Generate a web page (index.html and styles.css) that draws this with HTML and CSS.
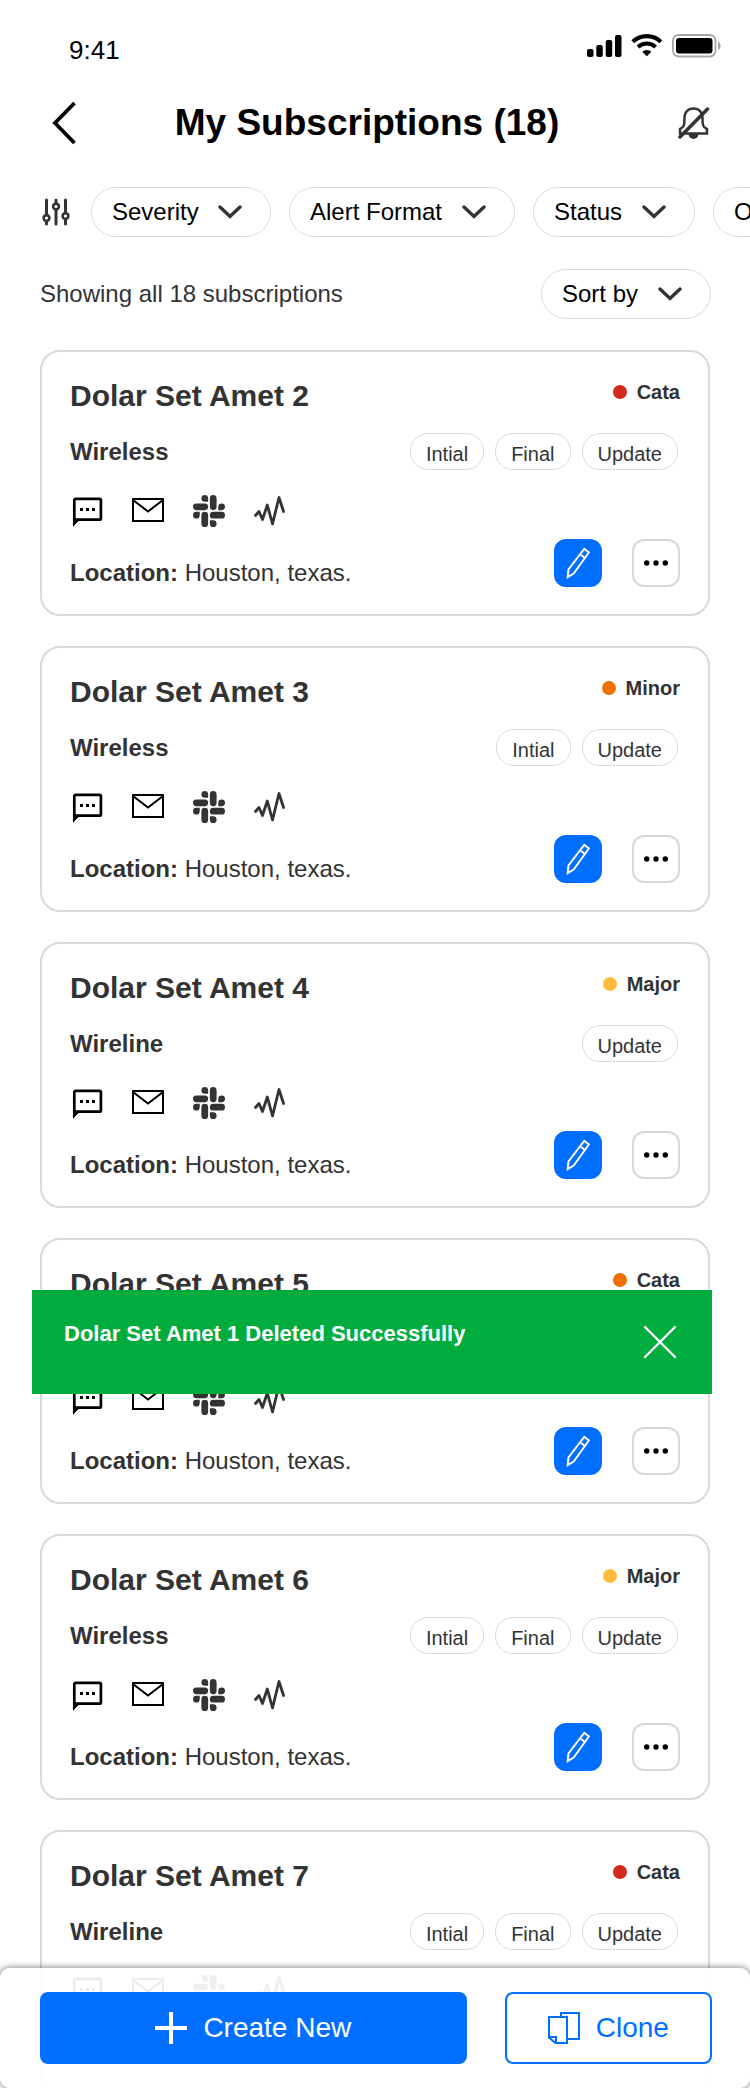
FILE: index.html
```html
<!DOCTYPE html>
<html lang="en">
<head>
<meta charset="utf-8">
<meta name="viewport" content="width=device-width, initial-scale=1">
<title>My Subscriptions</title>
<link rel="stylesheet" href="styles.css">
</head>
<body>
<svg class="sprite" aria-hidden="true">
  <symbol id="chevron" viewBox="0 0 24 14"><path d="M2 2l10 9.500L22 2" fill="none" stroke="#333" stroke-width="3.400" stroke-linecap="round" stroke-linejoin="miter"/></symbol>
  <symbol id="message" viewBox="0 0 32 32"><path d="M3.300 28V5.200a1.300 1.300 0 0 1 1.300-1.300h24a1.300 1.300 0 0 1 1.300 1.300v18.200a1.300 1.300 0 0 1-1.300 1.300H6z" fill="none" stroke="#000" stroke-width="2.700"/><path d="M2 22v9.500l6.500-6.500z"/><path d="M9 13h3v3H9zm6 0h3v3h-3zm6 0h3v3h-3z"/></symbol>
  <symbol id="mail" viewBox="0 0 32 32"><path d="M1 4h30v22H1zM1 5l15 11.500L31 5" fill="none" stroke="#000" stroke-width="2"/></symbol>
  <symbol id="slack-arm" viewBox="0 0 24 24"><path d="M8.830 0a2.520 2.520 0 0 1 2.520 2.520v2.520H8.830a2.520 2.520 0 0 1 0-5.040zM2.520 6.310h6.310a2.520 2.520 0 0 1 0 5.040H2.520a2.520 2.520 0 0 1 0-5.040z"/></symbol>
  <symbol id="slack" viewBox="0 0 24 24">
    <g fill="#333">
      <use href="#slack-arm" width="24" height="24"/>
      <use href="#slack-arm" width="24" height="24" transform="rotate(90 12 12)"/>
      <use href="#slack-arm" width="24" height="24" transform="rotate(180 12 12)"/>
      <use href="#slack-arm" width="24" height="24" transform="rotate(270 12 12)"/>
    </g>
  </symbol>
  <symbol id="pulse" viewBox="0 0 32 32"><path d="M1.500 20.500L5 16.500l3.500 8L13.300 10l5.200 19L25 2.500 29.500 16.500" fill="none" stroke="#333" stroke-width="2.800" stroke-linejoin="round" stroke-linecap="round"/></symbol>
  <symbol id="pencil" viewBox="0 0 24 32"><path d="M18.200 1.800l4.700 3.600-15 20.800-6.200 4 .8-7.800zM14.200 7.200l4.700 3.700" fill="none" stroke="#fff" stroke-width="1.900"/></symbol>
  <symbol id="dots" viewBox="0 0 24 6"><circle cx="2.700" cy="3" r="2.700"/><circle cx="12" cy="3" r="2.700"/><circle cx="21.300" cy="3" r="2.700"/></symbol>
</svg>

<div class="app">
  <div class="status-bar">
    <span class="clock">9:41</span>
    <svg class="status-icons" viewBox="0 0 136 24" aria-hidden="true">
      <rect x="0" y="15" width="6.500" height="8" rx="2"/>
      <rect x="9.300" y="11" width="6.500" height="12" rx="2"/>
      <rect x="18.700" y="6" width="6.500" height="17" rx="2"/>
      <rect x="28" y="1" width="6.500" height="22" rx="2"/>
      <path d="M45.800 7.800a20.300 20.300 0 0 1 28 0" fill="none" stroke="#000" stroke-width="4.200"/>
      <path d="M51 13a13 13 0 0 1 17.600 0" fill="none" stroke="#000" stroke-width="4"/>
      <path d="M55.300 17.700a6.700 6.700 0 0 1 9 0L59.800 22.300z"/>
      <rect x="86" y="1" width="42.500" height="21.500" rx="5.500" fill="none" stroke="#a6a6a6" stroke-width="1.800"/>
      <rect x="89" y="4" width="36.500" height="15.500" rx="3"/>
      <path d="M131 7.500c3.500 1.500 3.500 7 0 8.500z" fill="#a6a6a6"/>
    </svg>
  </div>

  <header class="header">
    <button class="icon-button" type="button" aria-label="Back">
      <svg class="back-icon" viewBox="0 0 24 44" aria-hidden="true"><path d="M22.500 2L3 22l19.500 20" fill="none" stroke="#000" stroke-width="3.800"/></svg>
    </button>
    <h1 class="page-title">My Subscriptions (18)</h1>
    <button class="icon-button" type="button" aria-label="Mute alerts">
      <svg class="bell-icon" viewBox="0 0 32 34" aria-hidden="true"><path d="M6.500 12.500C6.500 6 10 2.500 15.500 2.500s9 3.500 9 10c0 6.500.5 9 4.500 10.500v4.500H2V23c4-1.500 4.500-4 4.500-10.500z" fill="none" stroke="#333" stroke-width="2.500"/><path d="M10.500 28h10a5 5 0 0 1-10 0z" fill="#333"/><path d="M2 31L29.500 3" stroke="#333" stroke-width="3.500" stroke-linecap="round"/></svg>
    </button>
  </header>

  <div class="filters">
    <button class="icon-button filter-button" type="button" aria-label="Filters">
      <svg class="sliders-icon" viewBox="0 0 28 28" aria-hidden="true"><path d="M4.500 2v14M4.500 24v2M14 2v3M14 12v14M23.500 2v12M23.500 22v4" stroke="#333" stroke-width="3" stroke-linecap="round"/><g fill="none" stroke="#333" stroke-width="2.600"><circle cx="4.500" cy="20" r="2.900"/><circle cx="14" cy="8.500" r="2.900"/><circle cx="23.500" cy="18" r="2.900"/></g></svg>
    </button>
    <span class="pill"><select aria-label="Severity"><option>Severity</option></select><svg class="chevron"><use href="#chevron"/></svg></span>
    <span class="pill"><select aria-label="Alert Format"><option>Alert Format</option></select><svg class="chevron"><use href="#chevron"/></svg></span>
    <span class="pill"><select aria-label="Status"><option>Status</option></select><svg class="chevron"><use href="#chevron"/></svg></span>
    <span class="pill"><select aria-label="O"><option>O</option></select><svg class="chevron"><use href="#chevron"/></svg></span>
  </div>

  <div class="summary">
    <p class="count">Showing all 18 subscriptions</p>
    <span class="pill"><select aria-label="Sort by"><option>Sort by</option></select><svg class="chevron"><use href="#chevron"/></svg></span>
  </div>

  <main class="list">
    <article class="card">
      <div class="card-head"><h2 class="card-title">Dolar Set Amet 2</h2><span class="severity"><i class="dot dot-red"></i>Cata</span></div>
      <div class="card-type"><strong>Wireless</strong><div class="tags"><span class="tag">Intial</span><span class="tag">Final</span><span class="tag">Update</span></div></div>
      <div class="card-foot">
        <div class="details">
          <div class="channels"><svg><use href="#message"/></svg><svg><use href="#mail"/></svg><svg><use href="#slack"/></svg><svg><use href="#pulse"/></svg></div>
          <p class="location"><strong>Location:</strong> Houston, texas.</p>
        </div>
        <div class="actions"><button class="edit" type="button" aria-label="Edit"><svg><use href="#pencil"/></svg></button><button class="more" type="button" aria-label="More"><svg><use href="#dots"/></svg></button></div>
      </div>
    </article>

    <article class="card">
      <div class="card-head"><h2 class="card-title">Dolar Set Amet 3</h2><span class="severity"><i class="dot dot-orange"></i>Minor</span></div>
      <div class="card-type"><strong>Wireless</strong><div class="tags"><span class="tag">Intial</span><span class="tag">Update</span></div></div>
      <div class="card-foot">
        <div class="details">
          <div class="channels"><svg><use href="#message"/></svg><svg><use href="#mail"/></svg><svg><use href="#slack"/></svg><svg><use href="#pulse"/></svg></div>
          <p class="location"><strong>Location:</strong> Houston, texas.</p>
        </div>
        <div class="actions"><button class="edit" type="button" aria-label="Edit"><svg><use href="#pencil"/></svg></button><button class="more" type="button" aria-label="More"><svg><use href="#dots"/></svg></button></div>
      </div>
    </article>

    <article class="card">
      <div class="card-head"><h2 class="card-title">Dolar Set Amet 4</h2><span class="severity"><i class="dot dot-yellow"></i>Major</span></div>
      <div class="card-type"><strong>Wireline</strong><div class="tags"><span class="tag">Update</span></div></div>
      <div class="card-foot">
        <div class="details">
          <div class="channels"><svg><use href="#message"/></svg><svg><use href="#mail"/></svg><svg><use href="#slack"/></svg><svg><use href="#pulse"/></svg></div>
          <p class="location"><strong>Location:</strong> Houston, texas.</p>
        </div>
        <div class="actions"><button class="edit" type="button" aria-label="Edit"><svg><use href="#pencil"/></svg></button><button class="more" type="button" aria-label="More"><svg><use href="#dots"/></svg></button></div>
      </div>
    </article>

    <article class="card">
      <div class="card-head"><h2 class="card-title">Dolar Set Amet 5</h2><span class="severity"><i class="dot dot-orange"></i>Cata</span></div>
      <div class="card-type"></div>
      <div class="card-foot">
        <div class="details">
          <div class="channels"><svg><use href="#message"/></svg><svg><use href="#mail"/></svg><svg><use href="#slack"/></svg><svg><use href="#pulse"/></svg></div>
          <p class="location"><strong>Location:</strong> Houston, texas.</p>
        </div>
        <div class="actions"><button class="edit" type="button" aria-label="Edit"><svg><use href="#pencil"/></svg></button><button class="more" type="button" aria-label="More"><svg><use href="#dots"/></svg></button></div>
      </div>
      <div class="toast" role="status">
        <p class="toast-text">Dolar Set Amet 1 Deleted Successfully</p>
        <button class="icon-button" type="button" aria-label="Dismiss"><svg class="close-icon" viewBox="0 0 34 34" aria-hidden="true"><path d="M2 2l30 30M32 2L2 32" stroke="#fff" stroke-width="2.400" stroke-linecap="round"/></svg></button>
      </div>
    </article>

    <article class="card">
      <div class="card-head"><h2 class="card-title">Dolar Set Amet 6</h2><span class="severity"><i class="dot dot-yellow"></i>Major</span></div>
      <div class="card-type"><strong>Wireless</strong><div class="tags"><span class="tag">Intial</span><span class="tag">Final</span><span class="tag">Update</span></div></div>
      <div class="card-foot">
        <div class="details">
          <div class="channels"><svg><use href="#message"/></svg><svg><use href="#mail"/></svg><svg><use href="#slack"/></svg><svg><use href="#pulse"/></svg></div>
          <p class="location"><strong>Location:</strong> Houston, texas.</p>
        </div>
        <div class="actions"><button class="edit" type="button" aria-label="Edit"><svg><use href="#pencil"/></svg></button><button class="more" type="button" aria-label="More"><svg><use href="#dots"/></svg></button></div>
      </div>
    </article>

    <article class="card">
      <div class="card-head"><h2 class="card-title">Dolar Set Amet 7</h2><span class="severity"><i class="dot dot-red"></i>Cata</span></div>
      <div class="card-type"><strong>Wireline</strong><div class="tags"><span class="tag">Intial</span><span class="tag">Final</span><span class="tag">Update</span></div></div>
      <div class="card-foot">
        <div class="details">
          <div class="channels"><svg><use href="#message"/></svg><svg><use href="#mail"/></svg><svg><use href="#slack"/></svg><svg><use href="#pulse"/></svg></div>
        </div>
      </div>
    </article>
  </main>

  <footer class="bottom-bar">
    <button class="action primary" type="button"><svg viewBox="0 0 32 32" aria-hidden="true"><path d="M16 0v32M0 16h32" stroke="#fff" stroke-width="4"/></svg>Create New</button>
    <button class="action secondary" type="button"><svg viewBox="0 0 32 32" aria-hidden="true"><path d="M1 5h18v26H7.500L1 25.500zM1 25h7v6M13 5V1h18v26H19" fill="none" stroke="#006fff" stroke-width="2"/></svg>Clone</button>
  </footer>
</div>
</body>
</html>
```

FILE: styles.css
```css
* { box-sizing: border-box; }

body {
  margin: 0;
  background: #fff;
  color: #333;
  font-family: "Liberation Sans", Arial, sans-serif;
  font-size: 24px;
  line-height: 28px;
}

h1, h2, p { margin: 0; }

svg { display: block; flex: none; }

button, select { font: inherit; }

.sprite { position: absolute; width: 0; height: 0; }

.app {
  position: relative;
  display: flex;
  flex-direction: column;
  height: 100vh;
  overflow: hidden;
}

.status-bar {
  display: flex;
  justify-content: space-between;
  align-items: flex-start;
  padding: 34px 27px 0 69px;
  color: #000;
}

.clock { font-size: 26px; line-height: 32px; }

.status-icons { width: 136px; height: 24px; }

.header {
  display: flex;
  align-items: center;
  padding: 30px 40px 0 52px;
}

.icon-button {
  flex: none;
  padding: 0;
  border: 0;
  background: none;
  cursor: pointer;
}

.back-icon { width: 24px; height: 44px; }

.bell-icon { width: 32px; height: 34px; }

.page-title {
  flex: 1;
  padding-right: 20px;
  color: #000;
  font-size: 37px;
  line-height: 54px;
  text-align: center;
}

.filters {
  display: flex;
  flex: none;
  align-items: center;
  gap: 18px;
  margin-top: 37px;
  padding-left: 42px;
  overflow: hidden;
}

.filter-button { margin-right: 3px; }

.sliders-icon { width: 28px; height: 28px; }

.pill {
  display: flex;
  flex: none;
  align-items: center;
  gap: 19px;
  height: 50px;
  padding: 0 28px 0 20px;
  border: 1px solid #d8dada;
  border-radius: 25px;
  background: #fff;
}

.pill select {
  appearance: none;
  padding: 0;
  border: 0;
  background: none;
  color: #000;
}

.chevron { width: 24px; height: 14px; }

.summary {
  display: flex;
  flex: none;
  justify-content: space-between;
  align-items: center;
  margin-top: 32px;
  padding: 0 39px 0 40px;
}

.list {
  display: flex;
  flex-direction: column;
  gap: 30px;
  padding: 31px 40px 0;
}

.card {
  position: relative;
  padding: 26px 28px 27px;
  border: 2px solid #d8dada;
  border-radius: 20px;
}

.card-head {
  display: flex;
  justify-content: space-between;
  align-items: flex-start;
}

.card-title { font-size: 30px; line-height: 36px; }

.severity {
  display: flex;
  align-items: center;
  gap: 10px;
  font-size: 20px;
  font-weight: bold;
}

.dot { width: 14px; height: 14px; border-radius: 50%; }

.dot-red { background: #d52b1e; }

.dot-orange { background: #ed7000; }

.dot-yellow { background: #ffbc3d; }

.card-type {
  display: flex;
  justify-content: space-between;
  align-items: center;
  min-height: 37px;
  margin-top: 19px;
  padding-right: 2px;
}

.tags { display: flex; gap: 11px; }

.tag {
  height: 37px;
  padding: 5px 15px 0;
  border: 1px solid #d8dada;
  border-radius: 18px;
  font-size: 20px;
  line-height: 30px;
}

.card-foot {
  display: flex;
  justify-content: space-between;
  align-items: flex-end;
  margin-top: 25px;
}

.details { min-height: 92px; }

.channels {
  display: flex;
  gap: 29px;
  padding-left: 1px;
}

.channels svg { width: 32px; height: 32px; }

.location { margin-top: 32px; }

.actions { display: flex; gap: 30px; }

.edit, .more {
  display: flex;
  justify-content: center;
  align-items: center;
  width: 48px;
  height: 48px;
  padding: 0;
  border: 0;
  border-radius: 12px;
  background: #006fff;
}

.more { border: 2px solid #d8dada; background: #fff; }

.edit svg { width: 24px; height: 32px; }

.more svg { width: 24px; height: 6px; }

.toast {
  position: absolute;
  top: 50px;
  right: -4px;
  left: -10px;
  display: flex;
  justify-content: space-between;
  align-items: flex-start;
  min-height: 104px;
  padding: 30px 35px 30px 32px;
  background: #00ac3e;
  color: #fff;
}

.toast-text { font-size: 22px; font-weight: bold; }

.close-icon { width: 34px; height: 34px; margin-top: 5px; }

.bottom-bar {
  position: absolute;
  right: 0;
  bottom: 0;
  left: 0;
  display: flex;
  gap: 38px;
  padding: 24px 38px 24px 40px;
  border-radius: 10px;
  background: rgba(255, 255, 255, 0.92);
  box-shadow: 0 0 6px 1px rgba(0, 0, 0, 0.45);
}

.action {
  display: flex;
  justify-content: center;
  align-items: center;
  gap: 16px;
  height: 72px;
  padding: 0;
  border: 2px solid #006fff;
  border-radius: 8px;
  font-size: 28px;
}

.action svg { width: 32px; height: 32px; }

.primary { flex: 428; background: #006fff; color: #fff; }

.secondary { flex: 206; background: #fff; color: #006fff; }
```
